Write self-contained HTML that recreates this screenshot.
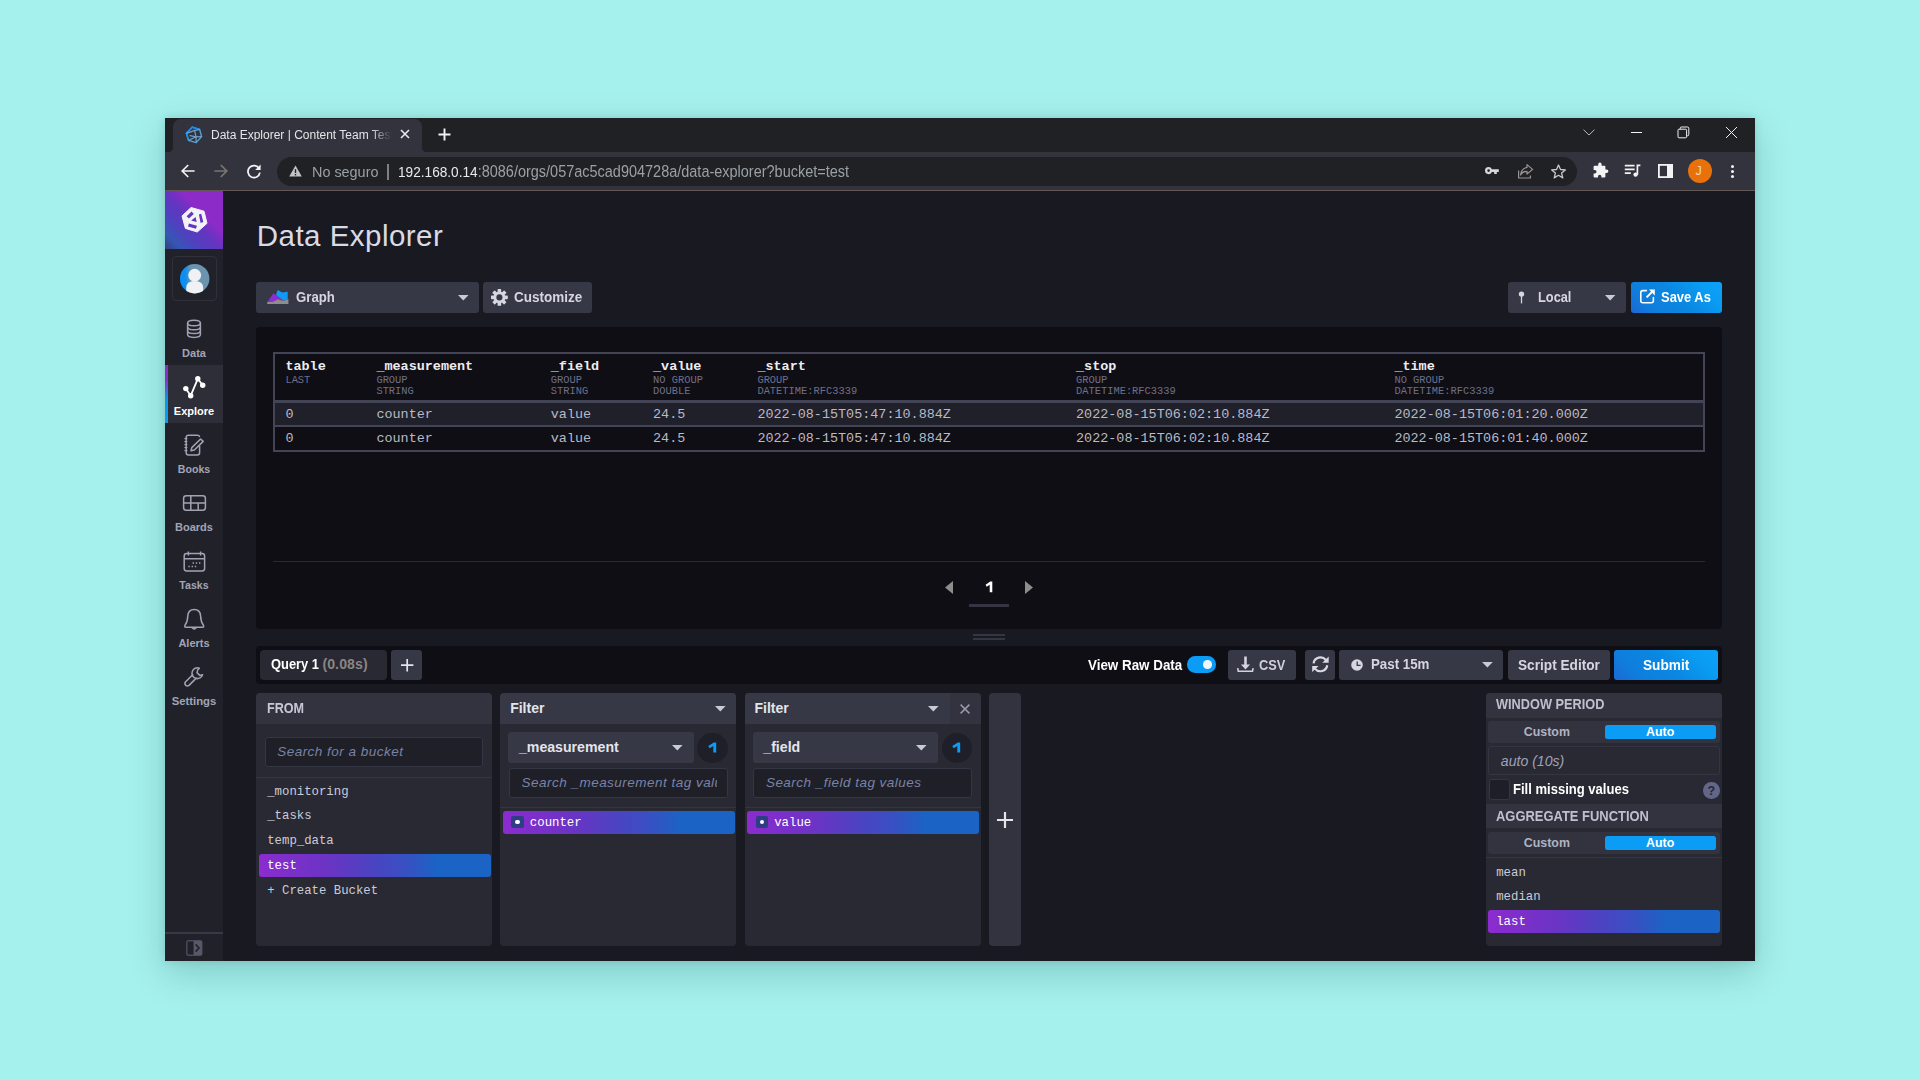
<!DOCTYPE html>
<html lang="en"><head><meta charset="utf-8"><title>Data Explorer</title>
<style>
*{box-sizing:border-box;margin:0;padding:0}
html,body{width:1920px;height:1080px;overflow:hidden;background:#a5f1ed;font-family:"Liberation Sans",sans-serif}
.a{position:absolute}
.t{position:absolute;white-space:nowrap;line-height:1;font-family:"Liberation Sans",sans-serif}
.m{position:absolute;white-space:nowrap;line-height:1;font-family:"Liberation Mono",monospace}
svg{position:absolute;overflow:visible}
.btn{position:absolute;background:#383846;border-radius:3px}
.sel{position:absolute;border-radius:3px;background:linear-gradient(90deg,#8c2bcf 0%,#6a34c4 30%,#4a44c2 50%,#3a4fc2 62%,#1b63c4 77%,#1b63c4 100%)}
.nl{left:165px;width:58px;text-align:center;font-weight:bold;font-size:11px}
</style></head><body>

<!-- WINDOW -->
<div class="a" id="win" style="left:165px;top:118px;width:1590px;height:843px;background:#191922;box-shadow:0 12px 34px rgba(0,60,60,.21),0 0 8px rgba(0,60,60,.13)"></div>

<!-- CHROME -->
<div class="a" id="titlebar" style="left:165px;top:118px;width:1590px;height:35px;background:#202124"></div>
<div class="a" id="toolbar" style="left:165px;top:152px;width:1590px;height:39px;background:#33333d;border-bottom:1px solid #625755"></div>
<div class="a" id="tab" style="left:173px;top:119px;width:249px;height:34px;background:#33333d;border-radius:8px 8px 0 0"></div>
<svg style="left:165px;top:145px" width="266" height="8" viewBox="165 145 266 8"><path d="M173.4 145 Q173.4 153 165.4 153 H173.4 Z M421.6 145 Q421.6 153 429.6 153 H421.6 Z" fill="#33333d"/></svg>
<div class="a" id="urlbar" style="left:277px;top:157px;width:1300px;height:29px;background:#202124;border-radius:15px"></div>


<!-- tab contents -->
<svg id="favicon" style="left:185px;top:125.8px" width="18" height="18" viewBox="0 0 18 18" fill="none" stroke-linejoin="round" stroke-linecap="round">
 <path d="M7.2 1.2 L14.6 3.4 L16.6 10.6 L11.2 16.6 L3.6 14.4 L1.4 7.2 Z" stroke="#5ba0d6" stroke-width="1.4"/>
 <path d="M7.2 1.2 L1.4 7.2 L3.6 14.4" stroke="#1a8cf0" stroke-width="1.6"/>
 <path d="M7.2 1.2 L14.6 3.4" stroke="#1a8cf0" stroke-width="1.6"/>
 <path d="M1.6 7.4 L9.6 4.4 L11 10.8 L3.8 14.2 M9.6 4.4 L14.4 3.6 M11 10.8 L16.4 10.6 M11 10.8 L11.2 16.4 M5 9.6 L11 10.8" stroke="#6aa4cf" stroke-width="1.2"/>
</svg>
<div class="t" id="tabtitle" style="left:211px;top:128.8px;font-size:12px;color:#e3e5e8;width:181px;overflow:hidden;-webkit-mask-image:linear-gradient(90deg,#000 0,#000 160px,transparent 181px)">Data Explorer | Content Team Test</div>
<svg style="left:400px;top:129px" width="10" height="10" viewBox="0 0 10 10"><path d="M1 1 L9 9 M9 1 L1 9" stroke="#e8eaed" stroke-width="1.6" fill="none"/></svg>
<svg style="left:438px;top:128px" width="13" height="13" viewBox="0 0 13 13"><path d="M6.5 0.5 V12.5 M0.5 6.5 H12.5" stroke="#f1f3f4" stroke-width="1.9" fill="none"/></svg>

<!-- window controls -->
<svg style="left:1583px;top:129px" width="12" height="7" viewBox="0 0 12 7"><path d="M0.5 0.7 L6 6 L11.5 0.7" stroke="#b4b6bc" stroke-width="1" fill="none"/></svg>
<div class="a" style="left:1631px;top:132px;width:11px;height:1px;background:#f4f4f4"></div>
<svg style="left:1677px;top:126px" width="13" height="13" viewBox="0 0 13 13" fill="none" stroke="#f0f0f0" stroke-width="1"><rect x="1" y="3.2" width="8.6" height="8.6" rx="1"/><path d="M3.2 3.2 V2.2 Q3.2 1 4.4 1 H10.6 Q11.8 1 11.8 2.2 V8.6 Q11.8 9.8 10.6 9.8 H9.6"/></svg>
<svg style="left:1725px;top:126px" width="13" height="13" viewBox="0 0 13 13"><path d="M1 1 L12 12 M12 1 L1 12" stroke="#f0f0f0" stroke-width="1" fill="none"/></svg>

<!-- toolbar icons -->
<svg style="left:181px;top:164px" width="14" height="14" viewBox="0 0 14 14" fill="none" stroke="#f1f3f4" stroke-width="1.7"><path d="M13.6 7 H1.6 M7.2 1 L1.2 7 L7.2 13"/></svg>
<svg style="left:214px;top:164px" width="14" height="14" viewBox="0 0 14 14" fill="none" stroke="#7b7674" stroke-width="1.7"><path d="M0.4 7 H12.4 M6.8 1 L12.8 7 L6.8 13"/></svg>
<svg style="left:246px;top:163px" width="16" height="16" viewBox="0 0 16 16" fill="none"><path d="M13.2 5.6 A6 6 0 1 0 13.9 9.6" stroke="#f1f3f4" stroke-width="1.8"/><path d="M14.6 1.6 V7 H9.2 Z" fill="#f1f3f4"/></svg>
<svg style="left:289px;top:165px" width="13" height="12" viewBox="0 0 13 12"><path d="M6.5 0.4 L12.8 11.6 H0.2 Z" fill="#c2c4c9"/><path d="M6.5 4.2 V8" stroke="#202124" stroke-width="1.4"/><rect x="5.8" y="9" width="1.4" height="1.4" fill="#202124"/></svg>
<div class="t" id="noseg" style="left:311.7px;top:164px;font-size:15.5px;color:#9aa0a6;transform:scaleX(0.929);transform-origin:0 0">No seguro</div>
<div class="a" style="left:387px;top:163.6px;width:1.7px;height:16.4px;background:#837d7b"></div>
<div class="t" id="url" style="left:398px;top:164px;font-size:15.58px;color:#9aa0a6;transform:scaleX(0.929);transform-origin:0 0"><span style="color:#e8eaed;font-size:14.7px">192.168.0.14</span>:8086/orgs/057ac5cad904728a/data-explorer?bucket=test</div>

<svg style="left:1485px;top:165.4px" width="14.4" height="11.2" viewBox="0 0 14.4 11.2"><path d="M3.6 2 A3.6 3.6 0 1 0 3.6 9.2 A3.6 3.6 0 0 0 6.9 7 H9.2 V9 H11.8 V7 H13.8 V4.2 H6.9 A3.6 3.6 0 0 0 3.6 2 Z M3.6 4.3 A1.3 1.3 0 1 1 3.6 6.9 A1.3 1.3 0 0 1 3.6 4.3 Z" fill="#d5d7db" fill-rule="evenodd"/></svg>
<svg style="left:1517px;top:163px" width="17" height="16" viewBox="0 0 17 16" fill="none" stroke="#9a9492" stroke-width="1.2" stroke-linejoin="round"><path d="M1.6 7.4 V15 H13.4 V12.6"/><path d="M10 1.6 L15.6 6.4 L10 11 V8.4 Q5.6 8.2 3.6 12 Q4 6 10 4.4 Z"/></svg>
<svg style="left:1551px;top:164px" width="15" height="15" viewBox="0 0 15 15" fill="none" stroke="#c6c9ce" stroke-width="1.3" stroke-linejoin="round"><path d="M7.5 1 L9.5 5.5 L14.3 5.9 L10.6 9.1 L11.8 13.9 L7.5 11.3 L3.2 13.9 L4.4 9.1 L0.7 5.9 L5.5 5.5 Z"/></svg>
<svg style="left:1592px;top:163px" width="16" height="16" viewBox="0 0 16 16"><path d="M6.2 1.2 A1.7 1.7 0 0 1 9.6 1.2 V2.8 H12.4 Q13.4 2.8 13.4 3.8 V6.4 H14.6 A1.8 1.8 0 0 1 14.6 10 H13.4 V13.6 Q13.4 14.6 12.4 14.6 H9.4 V13.4 A1.7 1.7 0 0 0 6 13.4 V14.6 H2.6 Q1.6 14.6 1.6 13.6 V10.4 H2.8 A1.7 1.7 0 0 0 2.8 7 H1.6 V3.8 Q1.6 2.8 2.6 2.8 H6.2 Z" fill="#f1f3f4"/></svg>
<svg style="left:1624px;top:164px" width="17" height="14" viewBox="0 0 17 14" fill="none"><path d="M0.8 1.6 H10.6 M0.8 5.4 H10.6 M0.8 9.2 H6.8" stroke="#f1f3f4" stroke-width="1.7"/><path d="M13.4 10.6 V1.4 H16.4" stroke="#f1f3f4" stroke-width="1.7"/><circle cx="11.6" cy="10.6" r="2.2" fill="#f1f3f4"/></svg>
<svg style="left:1658px;top:164px" width="15" height="14" viewBox="0 0 15 14"><rect x="0.9" y="0.9" width="13.2" height="12.2" fill="none" stroke="#f1f3f4" stroke-width="1.8"/><rect x="9" y="0.9" width="5.1" height="12.2" fill="#f1f3f4"/></svg>
<div class="a" style="left:1687.5px;top:159px;width:24px;height:24px;border-radius:12px;background:#e8710a"></div>
<div class="t" style="left:1695.5px;top:165px;font-size:12.5px;color:#f6d4b4">J</div>
<div class="a" style="left:1730.5px;top:164.5px;width:3px;height:3px;border-radius:2px;background:#f1f3f4;box-shadow:0 5px 0 #f1f3f4,0 10px 0 #f1f3f4"></div>

<!-- APP -->
<div class="a" id="nav" style="left:165px;top:191px;width:58px;height:770px;background:#21212a"></div>

<div class="a" id="logo" style="left:165px;top:191px;width:58px;height:58px;background:linear-gradient(45deg,#33407e 0%,#3556b4 14%,#5140bf 32%,#6335c0 48%,#8c2bc8 64%,#8c2bc8 100%)"></div>
<svg style="left:165px;top:191px" width="58" height="58" viewBox="165 191 58 58">
 <path d="M191.1 207.5 L204 211.2 L207 223.3 L197.3 232 L185.4 228.4 L182 215.9 Z" fill="#f3f3f6" stroke="#f3f3f6" stroke-width="1" stroke-linejoin="round"/>
 <path d="M186.6 216.3 L191.6 211.6 L193.8 213.9 L188.9 218.6 Z M198.9 214.4 L201.2 213.8 L203.3 222 L200.6 222.9 Z M188.9 223.4 L197 225.7 L195.9 228.8 L188 226.4 Z M191.2 220.4 L195.6 217.1 L196.7 221.9 Z" fill="#6335c0"/>
</svg>
<div class="a" style="left:172px;top:256px;width:45px;height:45px;border:1px solid #30303b;border-radius:4px"></div>
<svg style="left:179.5px;top:263.7px" width="29.4" height="29.4" viewBox="0 0 29.4 29.4">
 <defs><clipPath id="avc"><circle cx="14.7" cy="14.7" r="14.7"/></clipPath>
 <linearGradient id="avg" x1="0" y1="0" x2="1" y2="0"><stop offset="0" stop-color="#0d8ff2"/><stop offset=".18" stop-color="#0d8ff2"/><stop offset=".36" stop-color="#6b94b0"/><stop offset="1" stop-color="#6b94b0"/></linearGradient></defs>
 <circle cx="14.7" cy="14.7" r="14.7" fill="url(#avg)"/>
 <path d="M0 0 H10 L4 14 L7 30 H0 Z" fill="none"/>
 <g clip-path="url(#avc)"><circle cx="14.7" cy="11.2" r="6.4" fill="#f0f1f4"/><path d="M6.2 30 V24 Q6.2 17 14.7 17 Q23.2 17 23.2 24 V30 Z" fill="#f0f1f4"/></g>
</svg>

<!-- nav items -->
<div class="a" style="left:165px;top:365px;width:58px;height:58px;background:#2e2e38"></div>
<div class="a" style="left:165px;top:365px;width:3px;height:58px;background:linear-gradient(180deg,#8e2cc9 0%,#8e2cc9 25%,#0b97ee 60%,#0b9cf2 100%)"></div>

<!-- Data icon -->
<svg style="left:186px;top:319px" width="16" height="20" viewBox="0 0 16 20" fill="none" stroke="#a2a3b2" stroke-width="1.5">
 <ellipse cx="8" cy="4" rx="6.4" ry="2.8"/><path d="M1.6 4 V15.6 Q1.6 18.4 8 18.4 Q14.4 18.4 14.4 15.6 V4"/><path d="M1.6 8 Q1.6 10.8 8 10.8 Q14.4 10.8 14.4 8 M1.6 11.8 Q1.6 14.6 8 14.6 Q14.4 14.6 14.4 11.8"/>
</svg>
<div class="t nl" style="top:348px;color:#a2a5b5">Data</div>
<!-- Explore icon -->
<svg style="left:182px;top:375px" width="24" height="24" viewBox="182 375 24 24" fill="none" stroke="#fff" stroke-width="1.8" stroke-linecap="round"><path d="M185.8 388.6 L190.7 395.7 L197.8 378.8 L202.7 385.3"/><g fill="#fff" stroke="none"><circle cx="185.8" cy="388.6" r="2.7"/><circle cx="190.7" cy="395.7" r="2.7"/><circle cx="197.8" cy="378.8" r="2.7"/><circle cx="202.7" cy="385.3" r="2.7"/></g></svg>
<div class="t nl" style="top:406px;color:#fff">Explore</div>
<!-- Books icon -->
<svg style="left:183px;top:433px" width="22" height="24" viewBox="183 433 22 24" fill="none" stroke="#a2a3b2" stroke-width="1.5" stroke-linejoin="round" stroke-linecap="round">
 <path d="M199.6 446 V452.8 Q199.6 455 197.4 455 H188.4 Q186.2 455 186.2 452.8 V437.4 Q186.2 435.2 188.4 435.2 H197.4 Q199.2 435.2 199.5 436.4"/>
 <path d="M184.8 438.6 H187 M184.8 441.6 H187 M184.8 444.6 H187 M184.8 447.6 H187 M184.8 450.6 H187" stroke-width="1.1"/>
 <path d="M200.6 439 L203.2 441.4 L194.4 450 L191 450.8 L191.8 447.6 Z"/>
</svg>
<div class="t nl" style="top:464px;color:#a2a5b5;font-size:10.6px">Books</div>
<!-- Boards icon -->
<svg style="left:182px;top:494px" width="25" height="18" viewBox="182 494 25 18" fill="none" stroke="#a2a3b2" stroke-width="1.5"><rect x="183.6" y="495.8" width="21.8" height="14.4" rx="2.6"/><path d="M183.6 503 H205.4 M190.8 495.8 V510.2 M198.2 503 V510.2"/></svg>
<div class="t nl" style="top:522px;color:#a2a5b5">Boards</div>
<!-- Tasks icon -->
<svg style="left:182px;top:550px" width="25" height="23" viewBox="182 550 25 23" fill="none" stroke="#a2a3b2" stroke-width="1.5"><rect x="184.2" y="553.6" width="20.4" height="17.4" rx="2.4"/><path d="M184.2 558.8 H204.6 M188.4 551.4 V555.4 M200.6 551.4 V555.4"/><path d="M192.6 563 H194 M195.8 563 H197.2 M199 563 H200.4 M188.4 566.6 H189.8 M191.6 566.6 H193 M194.8 566.6 H196.2" stroke-width="1.5"/></svg>
<div class="t nl" style="top:580px;color:#a2a5b5;font-size:10.6px">Tasks</div>
<!-- Alerts icon -->
<svg style="left:182px;top:607px" width="25" height="25" viewBox="182 607 25 25" fill="none" stroke="#a2a3b2" stroke-width="1.5" stroke-linejoin="round"><path d="M194.2 609.6 Q200.2 609.6 200.6 616 Q200.8 622 203.6 625.6 Q204 627.2 202.6 627.2 H185.8 Q184.4 627.2 184.8 625.6 Q187.6 622 187.8 616 Q188.2 609.6 194.2 609.6 Z"/><path d="M192 627.4 Q194.2 630.6 196.4 627.4"/></svg>
<div class="t nl" style="top:638px;color:#a2a5b5">Alerts</div>
<!-- Settings icon -->
<svg style="left:182px;top:665px" width="25" height="24" viewBox="182 665 25 24" fill="none" stroke="#a2a3b2" stroke-width="1.5" stroke-linejoin="round"><path d="M199.4 668.2 A5.4 5.4 0 1 0 202.6 674.6 L199.8 675.4 L197 672.6 L197.8 669.8 Z M193.2 674.2 L185.4 682 Q184.2 684 185.8 685.4 Q187.4 686.6 189 685.4 L196.8 677.6" /></svg>
<div class="t nl" style="top:696px;color:#a2a5b5;font-size:11.3px">Settings</div>

<div class="a" style="left:165px;top:932.4px;width:58px;height:1.6px;background:#383846"></div>
<svg style="left:186px;top:940px" width="17" height="16" viewBox="0 0 17 16"><rect x="0.8" y="0.8" width="15" height="14.4" rx="2.2" fill="none" stroke="#4a4a5c" stroke-width="1.5"/><rect x="7.6" y="0.8" width="8.2" height="14.4" fill="#5a5868"/><path d="M9.6 4.4 L13 8 L9.6 11.6" stroke="#22222b" stroke-width="1.6" fill="none"/></svg>

<!-- MAIN -->
<div class="t" id="h1" style="left:256.8px;top:221px;font-size:29.5px;color:#d9dae3;letter-spacing:0.47px;">Data Explorer</div>
<div class="a" id="graphdd" style="left:256px;top:282px;width:223px;height:31px;background:#363845;border-radius:3px;"></div>
<svg style="left:266.5px;top:290.3px" width="21.6" height="14" viewBox="0 0 21.6 14"><path d="M9.1 4.3 L10.8 0.1 L15.2 2.4 L20.7 1.7 L20.7 9.3 L16.5 10.9 L9.5 5.2 Z" fill="#0f9bf5"/><path d="M0.2 12.2 L6.3 3.6 L9.5 5.2 L16.5 10.9 L10.8 9.3 L5.5 12.2 Z" fill="#8c2fd2"/><path d="M0.2 12.1 L5.5 12.1 L10.8 9.3 L16.5 10.9 L21.4 8.9 L21.4 13.9 L0.2 13.9 Z" fill="#8f8c8a"/></svg>
<div class="t" style="left:296px;top:290px;font-size:14.19px;color:#d5d6e0;font-weight:bold;transform:scaleX(0.9302);transform-origin:0 0;">Graph</div>
<svg style="left:457.6px;top:295.2px" width="10.6" height="5.6" viewBox="0 0 10.6 5.6"><path d="M0 0 H10.6 L5.3 5.6 Z" fill="#c9cad6"/></svg>
<div class="a" id="custbtn" style="left:483px;top:282px;width:109.2px;height:31px;background:#363845;border-radius:3px;"></div>
<svg style="left:491px;top:288.8px" width="16.8" height="16.8" viewBox="-8 -8 16 16"><g fill="#d5d6e0"><circle r="5.6"/><g id="teeth"><rect x="-1.7" y="-8" width="3.4" height="16" rx=".6"/><rect x="-1.7" y="-8" width="3.4" height="16" rx=".6" transform="rotate(45)"/><rect x="-1.7" y="-8" width="3.4" height="16" rx=".6" transform="rotate(90)"/><rect x="-1.7" y="-8" width="3.4" height="16" rx=".6" transform="rotate(135)"/></g></g><circle r="2.9" fill="#363845"/></svg>
<div class="t" style="left:513.6px;top:290px;font-size:14.18px;color:#d5d6e0;font-weight:bold;transform:scaleX(0.9524);transform-origin:0 0;">Customize</div>
<div class="a" id="localdd" style="left:1507.6px;top:282px;width:118.8px;height:31px;background:#363845;border-radius:3px;"></div>
<svg style="left:1517.5px;top:290.5px" width="7" height="13" viewBox="0 0 7 13"><circle cx="3.5" cy="3.1" r="2.7" fill="#d5d6e0"/><path d="M3.5 4 V12.4" stroke="#d5d6e0" stroke-width="1.3"/></svg>
<div class="t" style="left:1538.4px;top:291px;font-size:13.76px;color:#d5d6e0;font-weight:bold;transform:scaleX(0.9302);transform-origin:0 0;">Local</div>
<svg style="left:1605.2px;top:295.3px" width="10.4" height="5.5" viewBox="0 0 10.4 5.5"><path d="M0 0 H10.4 L5.2 5.5 Z" fill="#c9cad6"/></svg>
<div class="a" id="saveas" style="left:1630.8px;top:282px;width:91.1px;height:31px;background:linear-gradient(45deg,#1c69d4 0%,#0f7edc 22%,#0a87e1 50%,#0b9cf3 80%,#0ba2f8 100%);border-radius:3px;"></div>
<svg style="left:1640px;top:289.4px" width="15.4" height="14.6" viewBox="0 0 15.4 14.6" fill="none" stroke="#fff" stroke-width="1.6"><path d="M6.4 1.6 H2.8 Q0.8 1.6 0.8 3.6 V11.8 Q0.8 13.8 2.8 13.8 H11.4 Q13.4 13.8 13.4 11.8 V8.6" stroke-linecap="round"/><path d="M6.6 8.4 L13.6 1.4" stroke-width="2"/><path d="M9 0.4 H14.8 V6.4 Z" fill="#fff" stroke="none"/></svg>
<div class="t" style="left:1661.2px;top:291px;font-size:13.92px;color:#fff;font-weight:bold;transform:scaleX(0.9302);transform-origin:0 0;">Save As</div>
<div class="a" id="panel" style="left:256px;top:327.3px;width:1466px;height:301.6px;background:#0f0e15;border-radius:4px;"></div>
<div class="a" id="tbl" style="left:273px;top:352px;width:1432px;height:100px;background:transparent;border:2.2px solid #434455;"></div>
<div class="a" style="left:275px;top:400.4px;width:1428px;height:2.6px;background:#434455;"></div>
<div class="a" style="left:275.2px;top:403px;width:1427.8px;height:22px;background:#20202a;"></div>
<div class="a" style="left:275px;top:425.2px;width:1428px;height:1.8px;background:#434455;"></div>
<div class="m" style="left:285.4px;top:360px;font-size:13.45px;color:#ececf2;font-weight:bold;">table</div>
<div class="m" style="left:285.4px;top:375px;font-size:10.4px;color:#6e7088;">LAST</div>
<div class="m" style="left:285.4px;top:408px;font-size:13.45px;color:#b9bac6;">0</div>
<div class="m" style="left:285.4px;top:432px;font-size:13.45px;color:#b9bac6;">0</div>
<div class="m" style="left:376.4px;top:360px;font-size:13.45px;color:#ececf2;font-weight:bold;">_measurement</div>
<div class="m" style="left:376.4px;top:375px;font-size:10.4px;color:#6e7088;">GROUP</div>
<div class="m" style="left:376.4px;top:386px;font-size:10.4px;color:#6e7088;">STRING</div>
<div class="m" style="left:376.4px;top:408px;font-size:13.45px;color:#b9bac6;">counter</div>
<div class="m" style="left:376.4px;top:432px;font-size:13.45px;color:#b9bac6;">counter</div>
<div class="m" style="left:550.8px;top:360px;font-size:13.45px;color:#ececf2;font-weight:bold;">_field</div>
<div class="m" style="left:550.8px;top:375px;font-size:10.4px;color:#6e7088;">GROUP</div>
<div class="m" style="left:550.8px;top:386px;font-size:10.4px;color:#6e7088;">STRING</div>
<div class="m" style="left:550.8px;top:408px;font-size:13.45px;color:#b9bac6;">value</div>
<div class="m" style="left:550.8px;top:432px;font-size:13.45px;color:#b9bac6;">value</div>
<div class="m" style="left:653px;top:360px;font-size:13.45px;color:#ececf2;font-weight:bold;">_value</div>
<div class="m" style="left:653px;top:375px;font-size:10.4px;color:#6e7088;">NO GROUP</div>
<div class="m" style="left:653px;top:386px;font-size:10.4px;color:#6e7088;">DOUBLE</div>
<div class="m" style="left:653px;top:408px;font-size:13.45px;color:#b9bac6;">24.5</div>
<div class="m" style="left:653px;top:432px;font-size:13.45px;color:#b9bac6;">24.5</div>
<div class="m" style="left:757.4px;top:360px;font-size:13.45px;color:#ececf2;font-weight:bold;">_start</div>
<div class="m" style="left:757.4px;top:375px;font-size:10.4px;color:#6e7088;">GROUP</div>
<div class="m" style="left:757.4px;top:386px;font-size:10.4px;color:#6e7088;">DATETIME:RFC3339</div>
<div class="m" style="left:757.4px;top:408px;font-size:13.45px;color:#b9bac6;">2022-08-15T05:47:10.884Z</div>
<div class="m" style="left:757.4px;top:432px;font-size:13.45px;color:#b9bac6;">2022-08-15T05:47:10.884Z</div>
<div class="m" style="left:1076px;top:360px;font-size:13.45px;color:#ececf2;font-weight:bold;">_stop</div>
<div class="m" style="left:1076px;top:375px;font-size:10.4px;color:#6e7088;">GROUP</div>
<div class="m" style="left:1076px;top:386px;font-size:10.4px;color:#6e7088;">DATETIME:RFC3339</div>
<div class="m" style="left:1076px;top:408px;font-size:13.45px;color:#b9bac6;">2022-08-15T06:02:10.884Z</div>
<div class="m" style="left:1076px;top:432px;font-size:13.45px;color:#b9bac6;">2022-08-15T06:02:10.884Z</div>
<div class="m" style="left:1394.4px;top:360px;font-size:13.45px;color:#ececf2;font-weight:bold;">_time</div>
<div class="m" style="left:1394.4px;top:375px;font-size:10.4px;color:#6e7088;">NO GROUP</div>
<div class="m" style="left:1394.4px;top:386px;font-size:10.4px;color:#6e7088;">DATETIME:RFC3339</div>
<div class="m" style="left:1394.4px;top:408px;font-size:13.45px;color:#b9bac6;">2022-08-15T06:01:20.000Z</div>
<div class="m" style="left:1394.4px;top:432px;font-size:13.45px;color:#b9bac6;">2022-08-15T06:01:40.000Z</div>
<div class="a" style="left:273px;top:561px;width:1432px;height:1px;background:#2a2a36;"></div>
<svg style="left:985px;top:581px" width="8" height="12" viewBox="985 581 8 12"><path d="M992.3 581.6 V592.2 H989.7 V584.7 L986.7 586.7 L985.6 584.7 L990.2 581.6 Z" fill="#fff"/></svg>
<div class="a" style="left:969px;top:604.2px;width:40px;height:2.4px;background:#343442;"></div>
<svg style="left:945px;top:580.5px" width="8" height="13" viewBox="0 0 8 13"><path d="M8 0 V13 L0 6.5 Z" fill="#8f8c8e"/></svg>
<svg style="left:1025px;top:580.5px" width="8" height="13" viewBox="0 0 8 13"><path d="M0 0 V13 L8 6.5 Z" fill="#8f8c8e"/></svg>
<div class="a" style="left:972.6px;top:634px;width:32.6px;height:2px;background:#363643;"></div>
<div class="a" style="left:972.6px;top:638px;width:32.6px;height:2px;background:#363643;"></div>
<div class="a" id="qbar" style="left:256px;top:645.6px;width:1466px;height:38.4px;background:#0f0e15;border-radius:4px;"></div>
<div class="a" id="qtab" style="left:260.4px;top:649.6px;width:126.6px;height:30.4px;background:#292933;border-radius:4px;"></div>
<div class="t" style="left:270.8px;top:658px;font-size:13.87px;color:#fff;font-weight:bold;transform:scaleX(0.9302);transform-origin:0 0;">Query 1</div>
<div class="t" style="left:322.4px;top:657px;font-size:14.1px;color:#8b8583;font-weight:bold;letter-spacing:0.1px;">(0.08s)</div>
<div class="a" style="left:391.2px;top:649.6px;width:31.2px;height:30.4px;background:#363845;border-radius:3px;"></div>
<svg style="left:400.8px;top:658.6px" width="12.4" height="12.4" viewBox="0 0 12.4 12.4"><path d="M6.2 0 V12.4 M0 6.2 H12.4" stroke="#e4e5ec" stroke-width="1.7"/></svg>
<div class="t" id="vrd" style="left:1088.2px;top:658px;font-size:14.4px;color:#fff;font-weight:bold;transform:scaleX(0.9302);transform-origin:0 0;">View Raw Data</div>
<div class="a" style="left:1187.2px;top:656.2px;width:28.6px;height:16.4px;background:#0b9cf5;border-radius:8.2px;"></div>
<div class="a" style="left:1203.2px;top:660.2px;width:8.6px;height:8.6px;background:#f4f5f8;border-radius:4.3px;"></div>
<div class="a" style="left:1228.3px;top:649.6px;width:67.9px;height:30.4px;background:#363845;border-radius:3px;"></div>
<svg style="left:1237px;top:656px" width="16.4" height="16.6" viewBox="1237 656 16.4 16.6"><path d="M1244.2 656.5 H1246.8 V664.4 H1250.1 L1245.5 669.6 L1240.9 664.4 H1244.2 Z" fill="#d2d3de"/><path d="M1237.7 668.2 L1238.3 671.3 H1252.5 L1253.1 668.2" fill="none" stroke="#d2d3de" stroke-width="1.6"/></svg>
<div class="t" style="left:1259.4px;top:658px;font-size:14.34px;color:#cfd0dc;font-weight:bold;transform:scaleX(0.8929);transform-origin:0 0;">CSV</div>
<div class="a" style="left:1304.7px;top:649.6px;width:30.3px;height:30.4px;background:#363845;border-radius:3px;"></div>
<svg style="left:1311.8px;top:656px" width="16.8" height="16.8" viewBox="0 0 17 17"><g fill="none" stroke="#d8d9e3" stroke-width="2.2"><path d="M1.57 7.43 A7 7 0 0 1 14.02 4.09"/><path d="M15.43 9.37 A7 7 0 0 1 2.98 12.71"/></g><path d="M16.9 0.5 V6.8 H10.4 Z M0.2 16.3 V10 H6.7 Z" fill="#d8d9e3"/></svg>
<div class="a" style="left:1339.4px;top:649.6px;width:163.6px;height:30.4px;background:#363845;border-radius:3px;"></div>
<svg style="left:1350.8px;top:658.8px" width="12" height="12" viewBox="0 0 12 12"><circle cx="6" cy="6" r="5.8" fill="#d5d6e0"/><path d="M6.2 2.6 V6.4 H9.6" stroke="#363845" stroke-width="1.3" fill="none"/></svg>
<div class="t" id="past" style="left:1370.6px;top:657px;font-size:14.3px;color:#d5d6e0;font-weight:bold;transform:scaleX(0.9302);transform-origin:0 0;">Past 15m</div>
<svg style="left:1482px;top:662.4px" width="10.8" height="5.6" viewBox="0 0 10.8 5.6"><path d="M0 0 H10.8 L5.4 5.6 Z" fill="#c9cad6"/></svg>
<div class="a" style="left:1507.5px;top:649.6px;width:102.3px;height:30.4px;background:#363845;border-radius:3px;"></div>
<div class="t" id="se" style="left:1517.6px;top:658px;font-size:14.33px;color:#d5d6e0;font-weight:bold;transform:scaleX(0.9524);transform-origin:0 0;">Script Editor</div>
<div class="a" style="left:1614.4px;top:649.6px;width:103.6px;height:30.4px;background:linear-gradient(45deg,#1c69d4 0%,#0f7edc 22%,#0a87e1 50%,#0b9cf3 80%,#0ba2f8 100%);border-radius:3px;"></div>
<div class="t" id="submit" style="left:1642.6px;top:658px;font-size:14.33px;color:#fff;font-weight:bold;transform:scaleX(0.9524);transform-origin:0 0;">Submit</div>
<div class="a" id="fromcard" style="left:256px;top:693px;width:236.2px;height:252.5px;background:#292933;border-radius:4px;"></div>
<div class="a" style="left:256px;top:693px;width:236.2px;height:30.6px;background:#32333e;border-radius:4px 4px 0 0;"></div>
<div class="t" style="left:266.8px;top:701px;font-size:13.99px;color:#c6c8d6;font-weight:bold;transform:scaleX(0.9009);transform-origin:0 0;">FROM</div>
<div class="a" style="left:265.4px;top:737.2px;width:217.8px;height:29.4px;background:#1f1f28;border-radius:3px;border:1.6px solid #353644;"></div>
<div class="t" id="sfb" style="left:277.2px;top:745px;font-size:13.5px;color:#7a83a6;font-style:italic;letter-spacing:0.48px;">Search for a bucket</div>
<div class="a" style="left:256px;top:777.2px;width:236.2px;height:1px;background:#353542;"></div>
<div class="m" style="left:267.2px;top:786px;font-size:12.33px;color:#c9cbd8;">_monitoring</div>
<div class="m" style="left:267.2px;top:810px;font-size:12.33px;color:#c9cbd8;">_tasks</div>
<div class="m" style="left:267.2px;top:835px;font-size:12.33px;color:#c9cbd8;">temp_data</div>
<div class="sel" style="left:258.6px;top:853.6px;width:232px;height:23px"></div>
<div class="m" style="left:267.2px;top:860px;font-size:12.33px;color:#fff;">test</div>
<div class="m" style="left:267.2px;top:885px;font-size:12.33px;color:#c9cbd8;">+ Create Bucket</div>
<div class="a" style="left:500.35px;top:693px;width:236.1px;height:252.5px;background:#292933;border-radius:4px;"></div>
<div class="a" style="left:500.35px;top:693px;width:236.1px;height:30.8px;background:#363845;border-radius:4px 4px 0 0;"></div>
<svg style="left:715.35px;top:706px" width="10.6" height="5.6" viewBox="0 0 10.6 5.6"><path d="M0 0 H10.6 L5.3 5.6 Z" fill="#c9cad6"/></svg>
<div class="t" style="left:510.15000000000003px;top:701px;font-size:14px;color:#e3e4ec;font-weight:bold;">Filter</div>
<div class="a" style="left:508.45000000000005px;top:732.3px;width:185.1px;height:30.6px;background:#363845;border-radius:3px;"></div>
<div class="t" style="left:518.95px;top:740px;font-size:14.15px;color:#e3e4ec;font-weight:bold;">_measurement</div>
<svg style="left:671.95px;top:745px" width="10.6" height="5.6" viewBox="0 0 10.6 5.6"><path d="M0 0 H10.6 L5.3 5.6 Z" fill="#c9cad6"/></svg>
<div class="a" style="left:697.35px;top:732.6px;width:30.4px;height:30.4px;background:#1f1f29;border-radius:15.2px;"></div>
<svg style="left:707.95px;top:742px" width="9" height="11" viewBox="708 742 9 11"><path d="M716.2 742.6 V752.5 H713.3 V746 L709.6 748.2 L708.3 745.9 L713.8 742.6 Z" fill="#0b9cf5"/></svg>
<div class="a" style="left:508.75px;top:767.5px;width:219.3px;height:30.4px;background:#1f1f28;border-radius:3px;border:1.6px solid #353644;"></div>
<div class="t" style="left:521.5500000000001px;top:776px;font-size:13.5px;color:#7a83a6;font-style:italic;letter-spacing:0.48px;width:195.4px;overflow:hidden;">Search _measurement tag values</div>
<div class="a" style="left:500.35px;top:807.2px;width:236.1px;height:1px;background:#353542;"></div>
<div class="sel" style="left:502.95000000000005px;top:811.1px;width:232px;height:22.6px"></div>
<div class="a" style="left:511.25px;top:816.4px;width:12.4px;height:11.8px;background:#2f3d85;border-radius:2px;"></div>
<div class="a" style="left:515.15px;top:819.8px;width:4.6px;height:4.6px;background:#fff;border-radius:2.3px;"></div>
<div class="m" style="left:529.85px;top:817px;font-size:12.33px;color:#fff;">counter</div>
<div class="a" style="left:744.7px;top:693px;width:236.1px;height:252.5px;background:#292933;border-radius:4px;"></div>
<div class="a" style="left:744.7px;top:693px;width:236.1px;height:30.8px;background:#32333e;border-radius:4px 4px 0 0;"></div>
<div class="a" style="left:744.7px;top:693px;width:205.6px;height:30.8px;background:#363845;border-radius:4px 0 0 0;"></div>
<svg style="left:960.1px;top:703.8px" width="10" height="10" viewBox="0 0 10 10"><path d="M0.6 0.6 L9.4 9.4 M9.4 0.6 L0.6 9.4" stroke="#9899ab" stroke-width="1.5"/></svg>
<svg style="left:928.4000000000001px;top:706px" width="10.6" height="5.6" viewBox="0 0 10.6 5.6"><path d="M0 0 H10.6 L5.3 5.6 Z" fill="#c9cad6"/></svg>
<div class="t" style="left:754.5px;top:701px;font-size:14px;color:#e3e4ec;font-weight:bold;">Filter</div>
<div class="a" style="left:752.8000000000001px;top:732.3px;width:185.1px;height:30.6px;background:#363845;border-radius:3px;"></div>
<div class="t" style="left:763.3000000000001px;top:740px;font-size:14.15px;color:#e3e4ec;font-weight:bold;">_field</div>
<svg style="left:916.3000000000001px;top:745px" width="10.6" height="5.6" viewBox="0 0 10.6 5.6"><path d="M0 0 H10.6 L5.3 5.6 Z" fill="#c9cad6"/></svg>
<div class="a" style="left:941.7px;top:732.6px;width:30.4px;height:30.4px;background:#1f1f29;border-radius:15.2px;"></div>
<svg style="left:952.3000000000001px;top:742px" width="9" height="11" viewBox="708 742 9 11"><path d="M716.2 742.6 V752.5 H713.3 V746 L709.6 748.2 L708.3 745.9 L713.8 742.6 Z" fill="#0b9cf5"/></svg>
<div class="a" style="left:753.1px;top:767.5px;width:219.3px;height:30.4px;background:#1f1f28;border-radius:3px;border:1.6px solid #353644;"></div>
<div class="t" style="left:765.9000000000001px;top:776px;font-size:13.5px;color:#7a83a6;font-style:italic;letter-spacing:0.48px;width:195.4px;overflow:hidden;">Search _field tag values</div>
<div class="a" style="left:744.7px;top:807.2px;width:236.1px;height:1px;background:#353542;"></div>
<div class="sel" style="left:747.3000000000001px;top:811.1px;width:232px;height:22.6px"></div>
<div class="a" style="left:755.6px;top:816.4px;width:12.4px;height:11.8px;background:#2f3d85;border-radius:2px;"></div>
<div class="a" style="left:759.5px;top:819.8px;width:4.6px;height:4.6px;background:#fff;border-radius:2.3px;"></div>
<div class="m" style="left:774.2px;top:817px;font-size:12.33px;color:#fff;">value</div>
<div class="a" style="left:988.9px;top:693px;width:31.7px;height:252.5px;background:#32333e;border-radius:4px;"></div>
<svg style="left:996.8px;top:811.6px" width="16" height="16" viewBox="0 0 16 16"><path d="M8 0 V16 M0 8 H16" stroke="#e4e5ec" stroke-width="2.2"/></svg>
<div class="a" id="rpanel" style="left:1486px;top:693px;width:235.9px;height:252.5px;background:#292933;border-radius:4px;"></div>
<div class="a" style="left:1486px;top:693px;width:235.9px;height:25.2px;background:#32333e;border-radius:4px 4px 0 0;"></div>
<div class="t" id="wp" style="left:1496.4px;top:698px;font-size:13.77px;color:#bec0cf;font-weight:bold;transform:scaleX(0.9259);transform-origin:0 0;">WINDOW PERIOD</div>
<div class="a" style="left:1488px;top:721.2px;width:232px;height:21.4px;background:#32333e;border-radius:3px;"></div>
<div class="t" style="left:1523.8px;top:726px;font-size:12.4px;color:#b0b2c2;font-weight:bold;">Custom</div>
<div class="a" style="left:1605px;top:725.0px;width:111px;height:13.8px;background:#0b9cf5;border-radius:2.5px;"></div>
<div class="t" style="left:1646px;top:726px;font-size:12.4px;color:#fff;font-weight:bold;">Auto</div>
<div class="a" style="left:1488px;top:746.4px;width:232px;height:28.8px;background:#292933;border-radius:3px;border:1.5px solid #343541;"></div>
<div class="t" id="auto10" style="left:1500.8px;top:754px;font-size:14.1px;color:#9fa2b6;font-style:italic;">auto (10s)</div>
<div class="a" style="left:1489px;top:779.4px;width:20.8px;height:21px;background:#1e1e28;border-radius:3px;border:1.5px solid #353644;"></div>
<div class="t" id="fmv" style="left:1513px;top:783px;font-size:13.96px;color:#fff;font-weight:bold;transform:scaleX(0.9346);transform-origin:0 0;">Fill missing values</div>
<div class="a" style="left:1703.1px;top:782.2px;width:16.6px;height:16.6px;background:#62678a;border-radius:8.3px;"></div>
<div class="t" style="left:1707.6px;top:785px;font-size:12.5px;color:#262630;font-weight:bold;">?</div>
<div class="a" style="left:1486px;top:803.8px;width:235.9px;height:24.4px;background:#32333e;"></div>
<div class="t" id="af" style="left:1496.4px;top:809px;font-size:13.99px;color:#bec0cf;font-weight:bold;transform:scaleX(0.9259);transform-origin:0 0;">AGGREGATE FUNCTION</div>
<div class="a" style="left:1488px;top:832.2px;width:232px;height:21.4px;background:#32333e;border-radius:3px;"></div>
<div class="t" style="left:1523.8px;top:837px;font-size:12.4px;color:#b0b2c2;font-weight:bold;">Custom</div>
<div class="a" style="left:1605px;top:836.0px;width:111px;height:13.8px;background:#0b9cf5;border-radius:2.5px;"></div>
<div class="t" style="left:1646px;top:837px;font-size:12.4px;color:#fff;font-weight:bold;">Auto</div>
<div class="a" style="left:1486px;top:857.2px;width:235.9px;height:1px;background:#353542;"></div>
<div class="m" style="left:1496.2px;top:867px;font-size:12.33px;color:#c9cbd8;">mean</div>
<div class="m" style="left:1496.2px;top:891px;font-size:12.33px;color:#c9cbd8;">median</div>
<div class="sel" style="left:1488px;top:910.3px;width:232px;height:22.4px"></div>
<div class="m" style="left:1496.2px;top:916px;font-size:12.33px;color:#fff;">last</div>
</body></html>
